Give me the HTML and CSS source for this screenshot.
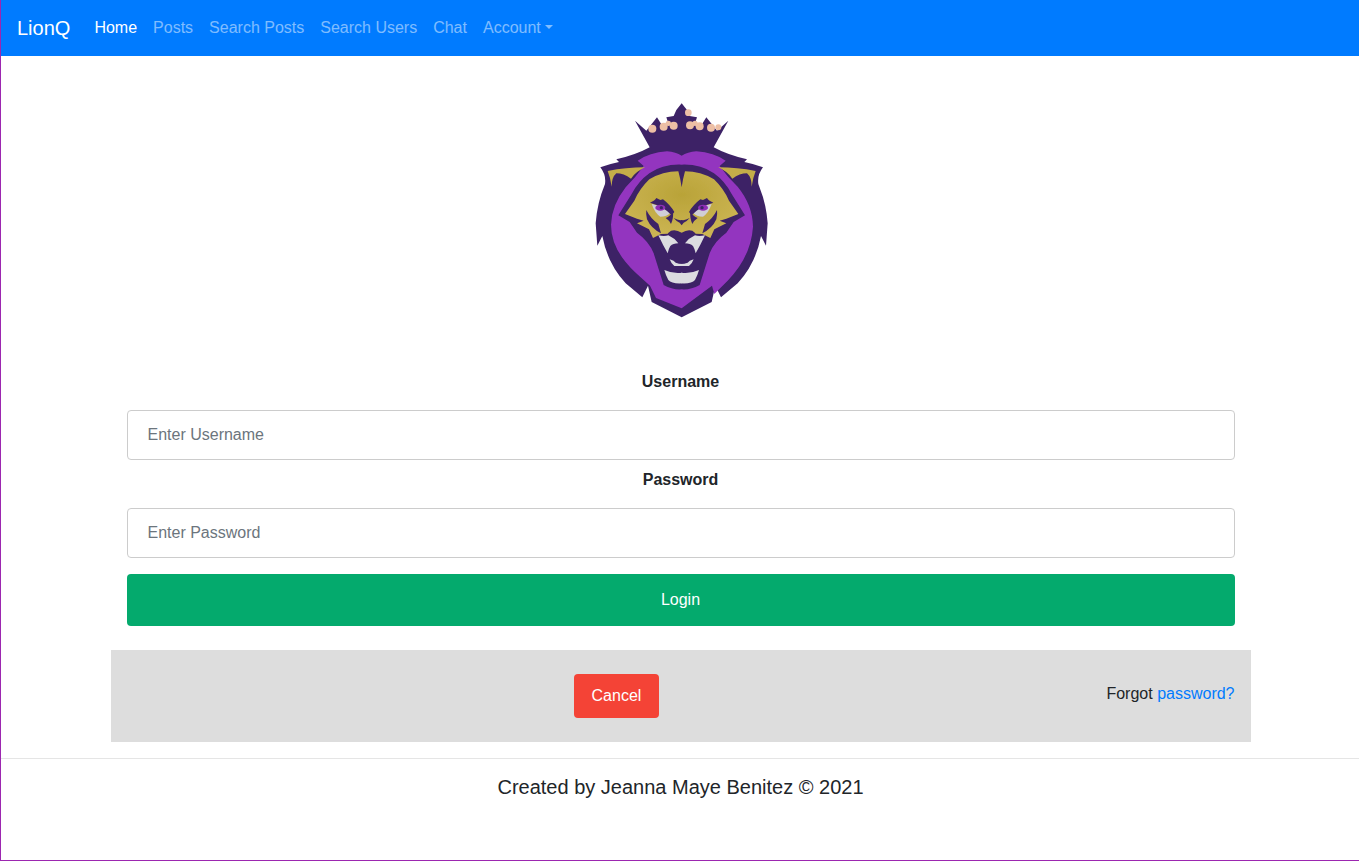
FILE: index.html
```html
<!DOCTYPE html>
<html lang="en">
<head>
<meta charset="utf-8">
<title>LionQ</title>
<link rel="stylesheet" href="styles.css">
</head>
<body>
<nav class="navbar">
  <a class="brand" href="#">LionQ</a>
  <ul class="nav-list">
    <li><a class="nav-link active" href="#">Home</a></li>
    <li><a class="nav-link" href="#">Posts</a></li>
    <li><a class="nav-link" href="#">Search Posts</a></li>
    <li><a class="nav-link" href="#">Search Users</a></li>
    <li><a class="nav-link" href="#">Chat</a></li>
    <li><a class="nav-link caret" href="#">Account</a></li>
  </ul>
</nav>
<main class="container">
  <div class="logo-wrap">
    <svg class="logo" viewBox="0 0 600 720" width="200" height="240" role="img" aria-label="LionQ logo">
      <defs>
        <filter id="soft" x="-5%" y="-5%" width="110%" height="110%"><feGaussianBlur stdDeviation="2"/></filter>
        <radialGradient id="goldGrad" cx="50%" cy="35%" r="60%"><stop offset="0" stop-color="#b9a338"/><stop offset="1" stop-color="#cbb452"/></radialGradient>
        <g id="half">
          <path class="gold" d="M80 243 Q135 232 192 232 Q165 244 150 266 Q128 250 106 250 Q92 262 92 290 Q88 262 80 243 Z"/>
          <path class="eye-white" d="M212 342 Q240 346 268 368 Q258 380 238 380 Q222 370 212 342 Z"/>
          <path class="dark" d="M207 338 Q222 332 226 324 L238 330 L246 328 Q268 345 280 366 L272 376 Q250 350 207 338 Z"/>
          <path class="dark" d="M254 384 Q268 380 276 364 Q278 385 270 402 Q266 392 254 384 Z"/>
          <ellipse class="iris" cx="238" cy="353" rx="15" ry="9"/>
          <circle class="dark" cx="241" cy="353" r="5"/>
          <path class="dark" d="M196 360 Q208 385 232 402 L240 430 Q210 415 198 388 Q194 372 196 360 Z"/>
          <path class="white" d="M232 436 Q250 440 262 436 Q280 444 292 460 Q276 460 268 468 Q262 478 260 490 Q246 466 232 436 Z"/>
          <path class="white" d="M266 508 Q280 512 284 518 Q294 522 304 522 L304 528 L280 528 Q270 520 266 508 Z"/>
          <path class="white" d="M250 540 Q276 552 304 548 L304 580 Q272 582 262 570 Q254 555 250 540 Z"/>
        </g>
      </defs>
      <g filter="url(#soft)">
        <path class="dark" d="M206 172 L162 92 L196 122 L228 82 L242 104 L262 100 L256 82 L278 78 L286 60 L302 40 L318 60 L326 78 L348 82 L342 100 L362 104 L376 82 L408 122 L442 92 L398 172 Q440 195 498 208 L490 216 Q520 222 546 232 Q528 255 532 282 Q556 340 560 400 L555 467 L540 438 Q525 520 470 580 L420 622 L403 587 L392 636 L302 682 L212 636 L201 587 L184 622 L134 580 Q79 520 64 438 L49 467 L44 400 Q48 340 72 282 Q76 255 58 232 Q84 222 114 216 L106 208 Q164 195 206 172 Z"/>
        <path class="purple" d="M170 212 Q205 188 258 184 Q285 186 302 197 Q319 186 346 184 Q399 188 434 212 L416 228 Q440 262 470 290 Q515 345 516 410 Q510 500 440 572 L400 612 L393 587 L302 655 L225 624 L207 587 L164 548 Q90 480 90 404 Q92 345 134 292 Q164 262 188 228 Z"/>
        <path class="dark" d="M302 224 Q245 222 205 250 Q172 274 152 312 L112 376 L146 396 L168 428 Q205 455 218 490 L248 585 Q275 600 302 598 Q329 600 356 585 L386 490 Q399 455 436 428 L458 396 L492 376 L452 312 Q432 274 399 250 Q359 222 302 224 Z"/>
        <path class="gold-face" d="M302 292 Q298 265 292 244 Q245 244 205 268 Q176 296 160 332 L132 372 L168 386 L188 392 L168 400 L204 418 L216 444 L240 432 L302 430 L364 432 L388 444 L400 418 L436 400 L416 392 L436 386 L472 372 L444 332 Q428 296 399 268 Q359 244 312 244 Q306 265 302 292 Z"/>
        <path class="dark" d="M270 422 Q285 417 302 428 Q319 417 334 422 Q344 427 346 438 Q325 440 304 458 Q279 440 258 438 Q260 427 270 422 Z"/>
        <path class="dark" d="M278 384 Q292 392 302 390 Q312 392 326 384 Q316 396 308 398 L302 406 L296 398 Q288 396 278 384 Z"/>
        <use href="#half"/>
        <use href="#half" transform="matrix(-1 0 0 1 604 0)"/>
      </g>
      <g class="dots" filter="url(#soft)">
        <circle cx="214" cy="116" r="12"/><circle cx="248" cy="110" r="12"/><circle cx="278" cy="107" r="12"/><circle cx="262" cy="100" r="8"/><circle cx="322" cy="68" r="10"/><circle cx="327" cy="106" r="12"/><circle cx="356" cy="109" r="12"/><circle cx="342" cy="100" r="8"/><circle cx="390" cy="113" r="12"/><circle cx="412" cy="112" r="9"/>
      </g>
    </svg>
  </div>
  <form class="login">
    <label class="field-label" for="username">Username</label>
    <input class="field" id="username" type="text" placeholder="Enter Username">
    <label class="field-label" for="password">Password</label>
    <input class="field" id="password" type="password" placeholder="Enter Password">
    <button class="login-btn" type="button">Login</button>
  </form>
  <div class="actions">
    <div class="cancel-cell"><button class="cancel-btn" type="button">Cancel</button></div>
    <span class="forgot">Forgot <a href="#">password?</a></span>
  </div>
</main>
<footer class="footer">
  <p>Created by Jeanna Maye Benitez © 2021</p>
</footer>
</body>
</html>
```
FILE: styles.css
```css
* { box-sizing: border-box; }
html { overflow-x: hidden; }
body {
  box-sizing: content-box;
  margin: 0;
  width: 100%;
  min-height: calc(100vh - 1px);
  border-left: 1px solid #9c27b0;
  border-bottom: 1px solid #9c27b0;
  font-family: "Liberation Sans", Arial, sans-serif;
  font-size: 16px;
  line-height: 24px;
  color: #212529;
  background: #fff;
}
a { text-decoration: none; }

.navbar {
  display: flex;
  align-items: center;
  height: 56px;
  padding: 8px 16px;
  background: #007bff;
}
.brand {
  margin-right: 16px;
  padding: 5px 0;
  font-size: 20px;
  line-height: 30px;
  color: #fff;
}
.nav-list {
  display: flex;
  margin: 0;
  padding: 0;
  list-style: none;
}
.nav-link {
  display: block;
  padding: 8px;
  color: rgba(255, 255, 255, .5);
}
.nav-link.active { color: #fff; }
.caret::after {
  content: "";
  display: inline-block;
  margin-left: 4px;
  vertical-align: 4px;
  border-top: 4.8px solid;
  border-left: 4.8px solid transparent;
  border-right: 4.8px solid transparent;
}

.container {
  width: 1140px;
  margin: 0 auto;
}
.logo-wrap {
  display: flex;
  justify-content: center;
  padding-top: 34px;
}
.logo { display: block; }
.dark { fill: #3c2266; }
.purple { fill: #9335bf; }
.gold { fill: #c4ad48; }
.gold-face { fill: url(#goldGrad); }
.white { fill: #dcdce0; }
.eye-white { fill: #d0ced6; }
.iris { fill: #8e2fb5; }
.dots { fill: #edbfa5; }

.login {
  display: flex;
  flex-direction: column;
  padding: 40px 16px 0;
}
.field-label {
  align-self: center;
  padding-bottom: 16px;
  font-weight: 700;
}
.field {
  height: 50px;
  margin-bottom: 8px;
  padding: 0 20px;
  border: 1px solid #ccc;
  border-radius: 4px;
  font: inherit;
  color: #495057;
  background: #fff;
}
.field:last-of-type { margin-bottom: 16px; }
.field::placeholder { color: #6c757d; opacity: 1; }
.login-btn {
  height: 52px;
  border: 0;
  border-radius: 4px;
  font: inherit;
  color: #fff;
  background: #04aa6d;
}
.actions {
  display: flex;
  align-items: flex-start;
  margin-top: 24px;
  padding: 16px;
  background: #ddd;
}
.cancel-cell {
  flex: 1;
  text-align: center;
}
.cancel-btn {
  display: inline-block;
  height: 44px;
  margin: 8px 0;
  padding: 0 18px;
  border: 0;
  border-radius: 4px;
  font: inherit;
  color: #fff;
  background: #f44336;
}
.forgot { padding-top: 16px; }
.forgot a { color: #007bff; }

.footer {
  margin-top: 16px;
  border-top: 1px solid rgba(0, 0, 0, .1);
  text-align: center;
}
.footer p {
  margin: 0;
  padding-top: 13px;
  font-size: 20px;
  line-height: 30px;
}
```
